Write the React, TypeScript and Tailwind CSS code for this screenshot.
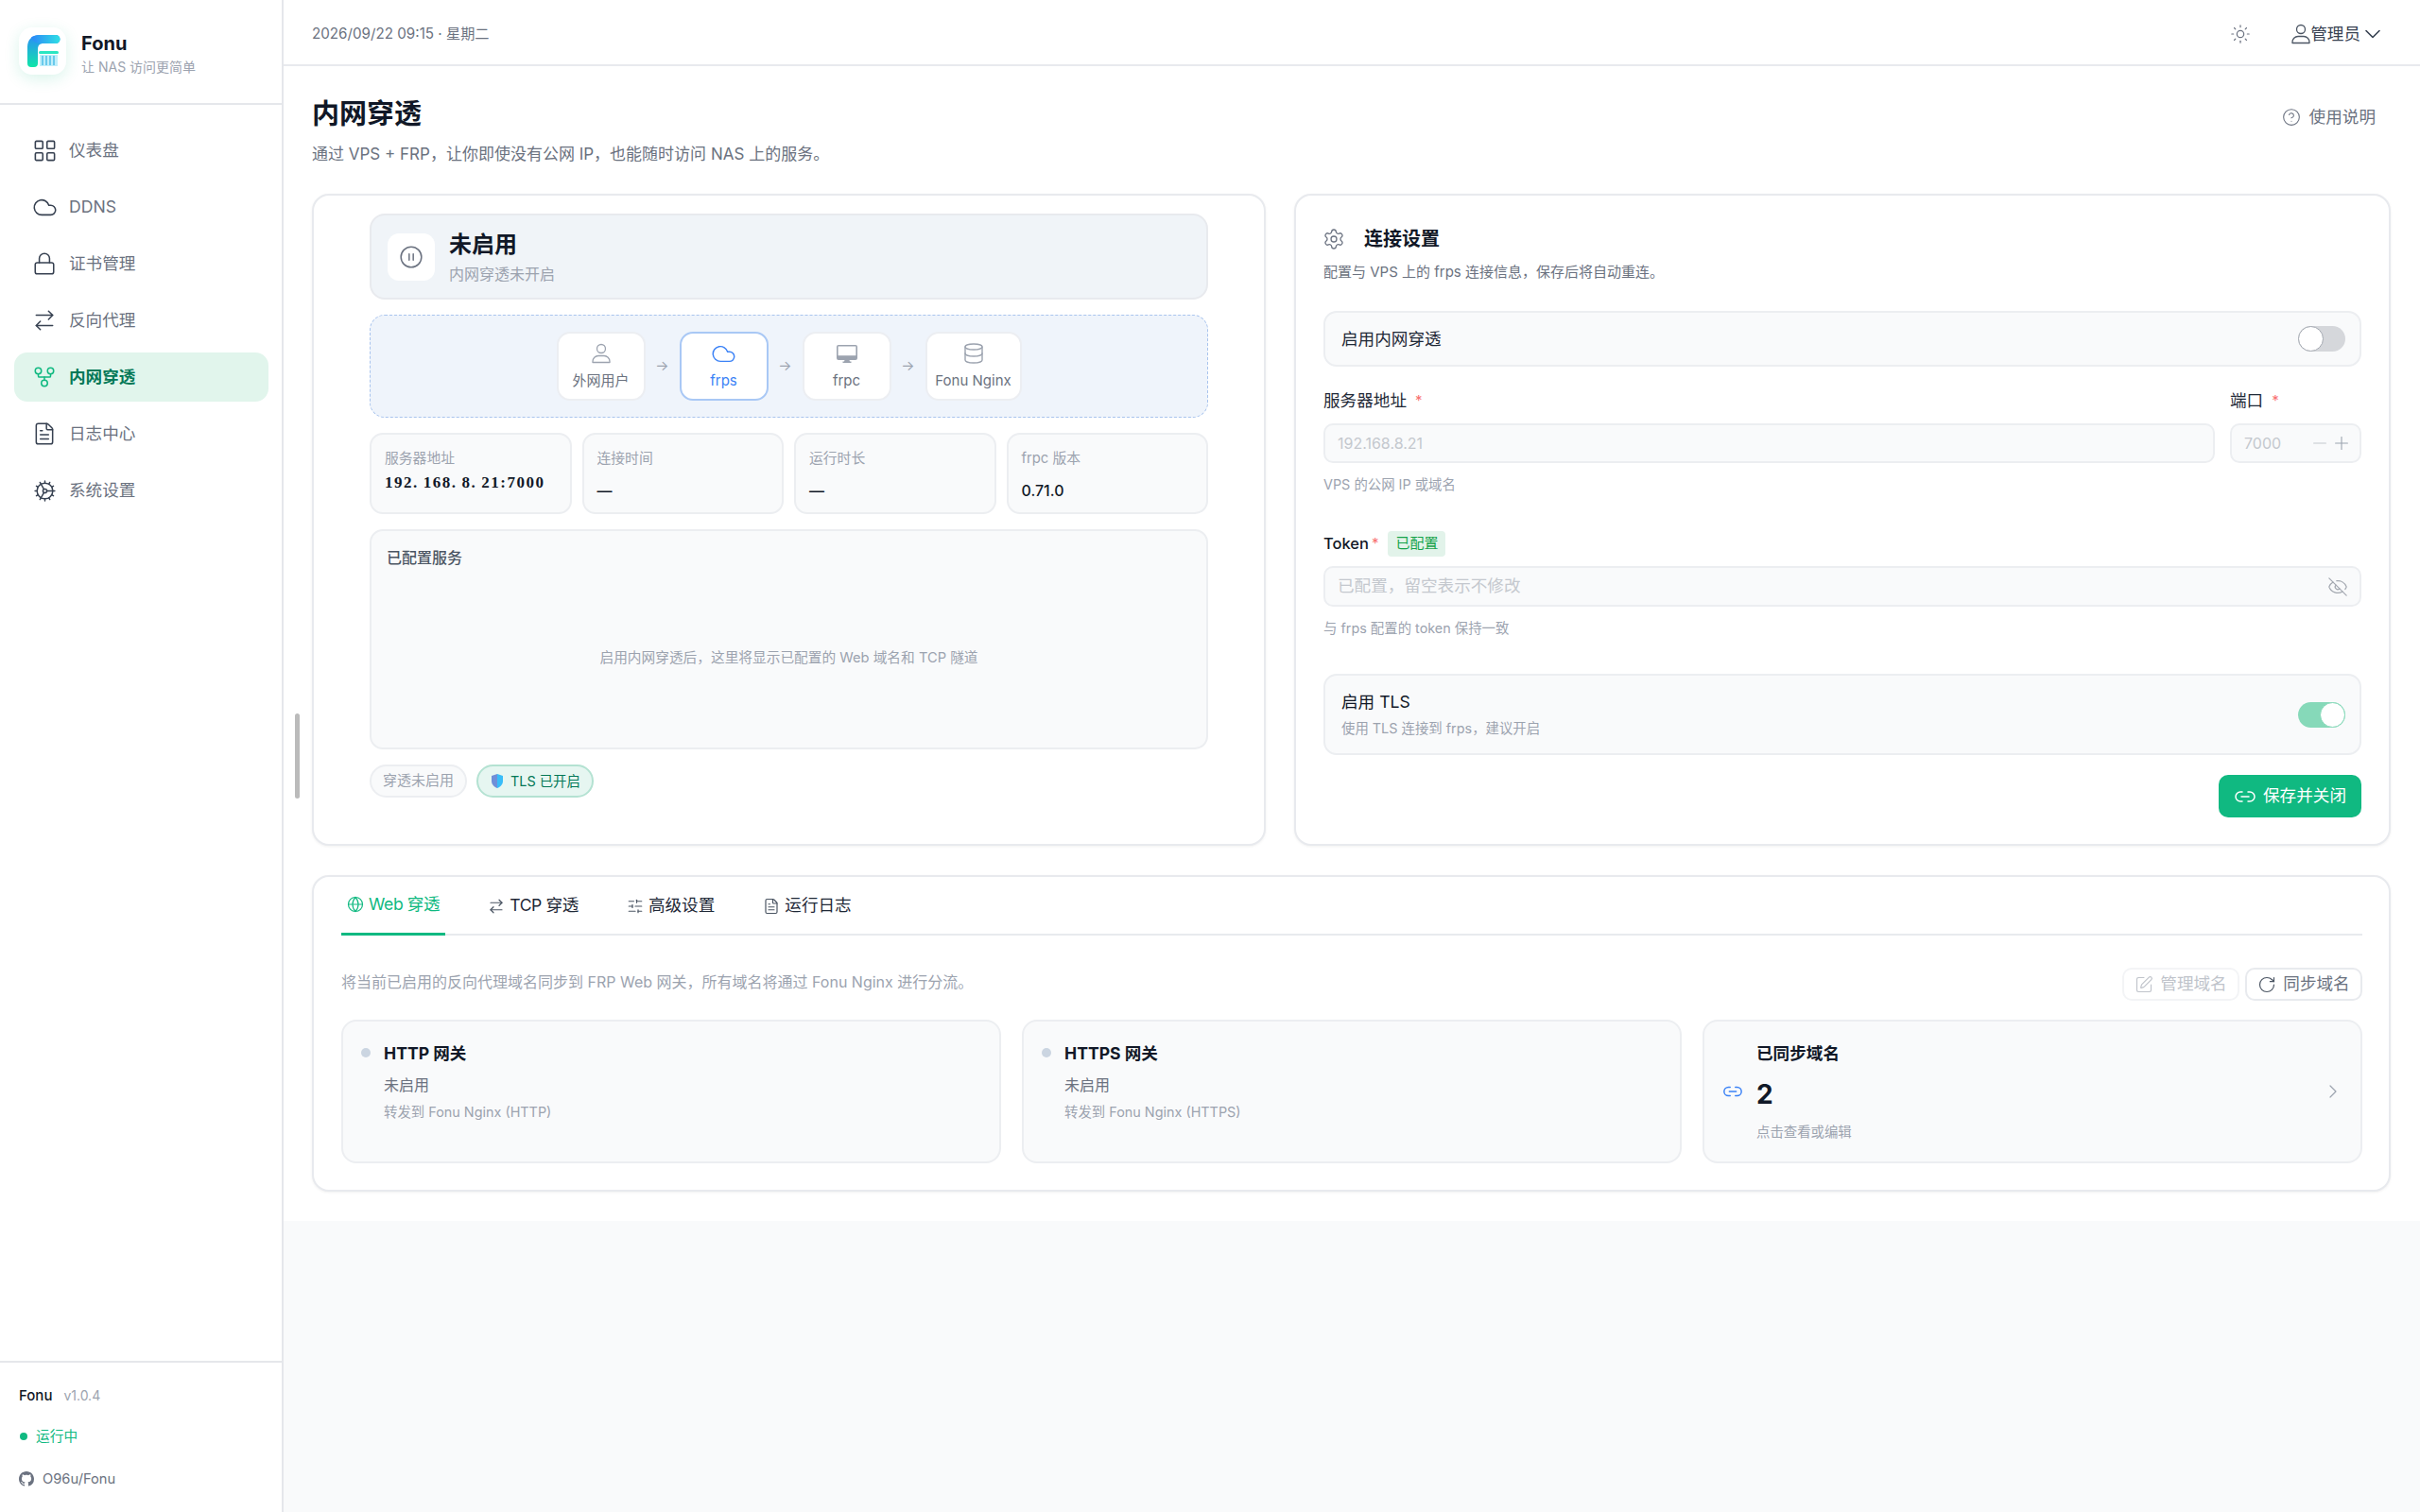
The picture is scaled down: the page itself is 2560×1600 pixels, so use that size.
import {
  ArrowRightLeft,
  ChevronDown,
  ChevronRight,
  CirclePause,
  CircleHelp,
  Cloud,
  Cog,
  Database,
  EyeOff,
  FileText,
  GitFork,
  Globe,
  LayoutGrid,
  Link2,
  Lock,
  Minus,
  Plus,
  RotateCw,
  Settings,
  SlidersHorizontal,
  SquarePen,
  Sun,
} from "lucide-react"

const navItems = [
  { label: "仪表盘", icon: LayoutGrid, size: "h-[27px] w-[27px]" },
  { label: "DDNS", icon: Cloud, size: "h-[27px] w-[27px]" },
  { label: "证书管理", icon: Lock, size: "h-[26px] w-[26px]" },
  { label: "反向代理", icon: ArrowRightLeft, size: "h-[26px] w-[26px]" },
  { label: "内网穿透", icon: GitFork, size: "h-[26px] w-[26px]", active: true },
  { label: "日志中心", icon: FileText, size: "h-[26px] w-[26px]" },
  { label: "系统设置", icon: Cog, size: "h-[25px] w-[25px]" },
]

const stats = [
  { label: "连接时间", value: "—" },
  { label: "运行时长", value: "—" },
  { label: "frpc 版本", value: "0.71.0" },
]

const tabs = [
  { label: "Web 穿透", icon: Globe, active: true, tight: true },
  { label: "TCP 穿透", icon: ArrowRightLeft, tight: true },
  { label: "高级设置", icon: SlidersHorizontal },
  { label: "运行日志", icon: FileText },
]

function UserGlyph({ className }: { className?: string }) {
  return (
    <svg viewBox="0 0 24 24" fill="none" stroke="currentColor" strokeWidth="1.3" className={className}>
      <circle cx="12" cy="7" r="4.500" />
      <path d="M3 21.500v-1a6 6 0 0 1 6-6h6a6 6 0 0 1 6 6v1z" strokeLinejoin="round" />
    </svg>
  )
}

function MonitorGlyph() {
  return (
    <svg viewBox="0 0 22 19" className="h-[19px] w-[22px] text-[#9ca3af]" fill="currentColor">
      <path d="M2 0h18a2 2 0 0 1 2 2v12a2 2 0 0 1-2 2h-6.500l.5 1.600h1.500V19h-9v-1.400H8l.5-1.600H2a2 2 0 0 1-2-2V2a2 2 0 0 1 2-2zm-.4 1.600v9.600h18.800V1.600z" />
    </svg>
  )
}

function Logo() {
  return (
    <div className="flex h-[50px] w-[50px] shrink-0 items-center justify-center rounded-[14px] bg-white shadow-[0_4px_16px_rgba(16,185,129,0.16)]">
      <svg viewBox="0 0 50 50" className="h-[50px] w-[50px]">
        <defs>
          <linearGradient id="logoTop" x1="0" y1="0" x2="1" y2="0">
            <stop offset="0" stopColor="#2b86f8" />
            <stop offset="1" stopColor="#2fe0e4" />
          </linearGradient>
          <linearGradient id="logoStem" x1="0" y1="0" x2="0" y2="1">
            <stop offset="0" stopColor="#2b8cf8" />
            <stop offset="1" stopColor="#10e6a8" />
          </linearGradient>
        </defs>
        <path d="M9 21C9 13 14 8 22 8h17a4.500 4.500 0 0 1 0 9H26c-4 0-6 2-6 6v15a4 4 0 0 1-4 4h-3a4 4 0 0 1-4-4z" fill="url(#logoStem)" />
        <path d="M13 10.500C15 9 18 8 22 8h17a4.500 4.500 0 0 1 0 9H24c-5 0-9-2-11-6.500z" fill="url(#logoTop)" />
        <rect x="21" y="25" width="21" height="3" rx="1.500" fill="#2be6c2" />
        <rect x="22" y="29" width="19" height="12" fill="#bfeefa" />
        <path d="M25 30v10M29 30v10M33 30v10M37 30v10" stroke="#4fbfe8" strokeWidth="1.500" />
      </svg>
    </div>
  )
}

function GithubMark() {
  return (
    <svg viewBox="0 0 16 16" fill="currentColor" className="h-4 w-4 text-[#6b7280]">
      <path d="M8 0C3.58 0 0 3.58 0 8c0 3.54 2.29 6.53 5.47 7.59.4.07.55-.17.55-.38 0-.19-.01-.82-.01-1.49-2.01.37-2.53-.49-2.69-.94-.09-.23-.48-.94-.82-1.13-.28-.15-.68-.52-.01-.53.63-.01 1.08.58 1.23.82.72 1.21 1.87.87 2.33.66.07-.52.28-.87.51-1.07-1.78-.2-3.64-.89-3.64-3.95 0-.87.31-1.59.82-2.15-.08-.2-.36-1.02.08-2.12 0 0 .67-.21 2.2.82.64-.18 1.32-.27 2-.27s1.36.09 2 .27c1.53-1.04 2.2-.82 2.2-.82.44 1.1.16 1.92.08 2.12.51.56.82 1.27.82 2.15 0 3.07-1.87 3.75-3.65 3.95.29.25.54.73.54 1.48 0 1.07-.01 1.93-.01 2.2 0 .21.15.46.55.38A8.01 8.01 0 0 0 16 8c0-4.42-3.58-8-8-8z" />
    </svg>
  )
}

function Toggle({ on }: { on?: boolean }) {
  return (
    <div className={`flex h-[27px] w-[50px] rounded-full ${on ? "justify-end bg-[#86d9b9]" : "justify-start bg-[#d5d7db]"}`}>
      <div className={`h-[27px] w-[27px] rounded-full border bg-white ${on ? "border-[#86d9b9]" : "border-[#a3a8b0]"}`} />
    </div>
  )
}

function Sidebar() {
  return (
    <aside className="flex w-[300px] shrink-0 flex-col border-r-2 border-[#e5e7eb] bg-white">
      <div className="flex h-[111px] items-center gap-4 border-b-2 border-[#e5e7eb] pb-[2px] pl-5">
        <Logo />
        <div className="pt-[6px]">
          <div className="text-[20px] leading-[26px] font-bold text-[#111827]">Fonu</div>
          <div className="mt-[2px] text-[14px] leading-5 text-[#9ca3af]">让 NAS 访问更简单</div>
        </div>
      </div>
      <nav className="mt-[22px] flex flex-col gap-2 pr-[14px] pl-[15px]">
        {navItems.map((item) => (
          <div
            key={item.label}
            className={`flex h-[52px] items-center gap-[14px] rounded-[14px] pl-5 text-[17.6px] ${
              item.active ? "bg-[#e1f5ec] font-semibold text-[#047857]" : "text-[#6b7280]"
            }`}
          >
            <span className="flex h-6 w-6 items-center justify-center">
              <item.icon className={`shrink-0 ${item.size} ${item.active ? "text-[#10b981]" : "text-[#374151]"}`} strokeWidth={1.4} />
            </span>
            {item.label}
          </div>
        ))}
      </nav>
      <div className="mt-auto h-[160px] border-t-2 border-[#e5e7eb] pt-[24px] pl-5">
        <div className="flex items-center gap-[12px] leading-[22px]">
          <span className="text-[15px] font-medium text-[#111827]">Fonu</span>
          <span className="text-[14px] text-[#9ca3af]">v1.0.4</span>
        </div>
        <div className="mt-[22px] flex items-center gap-[9px] text-[14.7px] leading-5 text-[#10b981]">
          <span className="ml-[1px] h-2 w-2 rounded-full bg-[#10b981]" />
          运行中
        </div>
        <div className="mt-[25px] flex items-center gap-[9px] text-[14.7px] leading-5 text-[#6b7280]">
          <GithubMark />
          O96u/Fonu
        </div>
      </div>
    </aside>
  )
}

function StatusCard() {
  return (
    <section className="flex flex-col gap-4 rounded-[18px] border-2 border-[#e8eaee] bg-white px-[59px] pt-[19px] shadow-[0_1px_3px_rgba(0,0,0,0.06)]">
      <div className="flex h-[91px] items-center gap-[15px] rounded-[16px] border-2 border-[#e8eaee] bg-[#f0f4f8] pl-[17px]">
        <div className="flex h-[50px] w-[50px] items-center justify-center rounded-[12px] bg-white">
          <CirclePause className="h-[26px] w-[26px] text-[#6b7280]" strokeWidth={1.4} />
        </div>
        <div>
          <div className="text-[24px] leading-8 font-bold text-[#111827]">未启用</div>
          <div className="mt-[5px] text-[16px] leading-5 text-[#9ca3af]">内网穿透未开启</div>
        </div>
      </div>

      <div className="flex h-[109px] items-center justify-center rounded-[16px] border border-dashed border-[#a9c4ee] bg-[#eff4fb]">
        <FlowNode icon={<UserGlyph className="h-6 w-6 text-[#9ca3af]" />} label="外网用户" />
        <FlowArrow />
        <FlowNode icon={<Cloud className="h-[27px] w-[27px] text-[#3b82f6]" strokeWidth={1.3} />} label="frps" highlight />
        <FlowArrow />
        <FlowNode icon={<MonitorGlyph />} label="frpc" />
        <FlowArrow />
        <FlowNode icon={<Database className="h-6 w-6 text-[#9ca3af]" strokeWidth={1.4} />} label="Fonu Nginx" wide />
      </div>

      <div className="grid grid-cols-4 gap-[11px]">
        <div className="h-[86px] rounded-[14px] border-2 border-[#eceef1] bg-[#f9fafb] px-[14px] pt-[15px]">
          <div className="text-[14.8px] leading-5 text-[#9ca3af]">服务器地址</div>
          <div className="mt-[6px] font-['Liberation_Serif',serif] text-[17px] leading-5 font-bold tracking-[1.5px] text-[#111827]">
            192<span className="mr-[5px]">.</span>168<span className="mr-[5px]">.</span>8<span className="mr-[5px]">.</span>21:7000
          </div>
        </div>
        {stats.map((stat) => (
          <div key={stat.label} className="h-[86px] rounded-[14px] border-2 border-[#eceef1] bg-[#f9fafb] px-[14px] pt-[15px]">
            <div className="text-[14.8px] leading-5 text-[#9ca3af]">{stat.label}</div>
            <div className="mt-[12px] text-[16px] leading-6 font-medium text-[#111827]">{stat.value}</div>
          </div>
        ))}
      </div>

      <div className="flex h-[233px] flex-col rounded-[14px] border-2 border-[#eceef1] bg-[#f9fafb] px-4 pt-[17px]">
        <div className="text-[16px] leading-[22px] font-medium text-[#4b5563]">已配置服务</div>
        <div className="flex flex-1 items-center justify-center text-[14.7px] text-[#9ca3af]">
          启用内网穿透后，这里将显示已配置的 Web 域名和 TCP 隧道
        </div>
      </div>

      <div className="flex gap-[10px]">
        <span className="flex h-[35px] items-center rounded-full border-2 border-[#eceef1] bg-[#f9fafb] px-3 text-[15px] text-[#9ca3af]">
          穿透未启用
        </span>
        <span className="flex h-[35px] items-center gap-[8px] rounded-full border-2 border-[#b4e2d2] bg-[#e6f6f1] pr-3 pl-[14px] text-[14.4px] text-[#047857]">
          <svg viewBox="0 0 12 15" className="h-[15px] w-3">
            <path d="M6 0l6 2v5.500C12 11 9.500 13.500 6 15z" fill="#38bdf8" />
            <path d="M6 0L0 2v5.500C0 11 2.500 13.500 6 15z" fill="#6f8fd8" />
          </svg>
          TLS 已开启
        </span>
      </div>
    </section>
  )
}

function FlowNode({ icon, label, highlight, wide }: { icon: React.ReactNode; label: string; highlight?: boolean; wide?: boolean }) {
  return (
    <div
      className={`flex h-[73px] flex-col items-center rounded-[14px] border-2 bg-white pt-[9px] text-[15px] ${
        wide ? "w-[102px]" : "w-[94px]"
      } ${highlight ? "border-[#a9c8f5] text-[#3b82f6]" : "border-[#eceef2] text-[#6b7280]"}`}
    >
      <div className="flex h-[24px] items-center">{icon}</div>
      <div className="mt-[7px] leading-5">{label}</div>
    </div>
  )
}

function FlowArrow() {
  return <div className="flex w-[36px] justify-center text-[15px] text-[#9ca3af]">→</div>
}

function SettingsCard() {
  return (
    <section className="rounded-[18px] border-2 border-[#e8eaee] bg-white px-[29px] pt-[32px] shadow-[0_1px_3px_rgba(0,0,0,0.06)]">
      <div className="flex h-7 items-center gap-[20px]">
        <Settings className="-ml-[1px] h-6 w-6 text-[#6b7280]" strokeWidth={1.3} />
        <h2 className="text-[20px] font-bold text-[#111827]">连接设置</h2>
      </div>
      <p className="mt-[9px] text-[15px] leading-6 text-[#6b7280]">配置与 VPS 上的 frps 连接信息，保存后将自动重连。</p>

      <div className="mt-[29px] flex h-[59px] items-center justify-between rounded-[14px] border-2 border-[#eceef1] bg-[#f9fafb] pr-[15px] pl-[17px]">
        <span className="pt-[2px] text-[17.6px] text-[#1f2937]">启用内网穿透</span>
        <Toggle />
      </div>

      <div className="mt-[23px] grid grid-cols-[1fr_139px] gap-x-4">
        <div>
          <Label text="服务器地址" />
          <input
            disabled
            placeholder="192.168.8.21"
            className="mt-[11px] h-[42px] w-full rounded-[10px] border-2 border-[#eceef1] bg-[#f9fafb] px-[13px] text-[16px] placeholder:text-[#c4c8ce]"
          />
          <p className="mt-[13px] text-[14.4px] leading-5 text-[#9ca3af]">VPS 的公网 IP 或域名</p>
        </div>
        <div>
          <Label text="端口" />
          <div className="mt-[11px] flex h-[42px] items-center rounded-[10px] border-2 border-[#eceef1] bg-[#f9fafb] pr-[8px] pl-[13px] text-[16px] text-[#c4c8ce]">
            <span>7000</span>
            <Minus className="ml-auto h-[22px] w-[22px]" strokeWidth={1.2} />
            <Plus className="ml-[1px] h-[22px] w-[22px] text-[#9ca3af]" strokeWidth={1.2} />
          </div>
        </div>
      </div>

      <div className="mt-[39px] flex h-[27px] items-center">
        <span className="text-[16.5px] font-medium text-[#111827]">Token</span>
        <span className="ml-[3px] text-[15px] text-[#f87171]">*</span>
        <span className="ml-[10px] flex h-[27px] items-center rounded-[4px] bg-[#e2f3ea] px-2 text-[15px] text-[#16a34a]">已配置</span>
      </div>
      <div className="mt-[10px] flex h-[43px] items-center justify-between rounded-[10px] border-2 border-[#eceef1] bg-[#f9fafb] pr-[12px] pl-[13px]">
        <span className="text-[17.6px] text-[#c4c8ce]">已配置，留空表示不修改</span>
        <EyeOff className="h-[22px] w-[22px] text-[#a3a8b0]" strokeWidth={1.3} />
      </div>
      <p className="mt-[13px] text-[14.4px] leading-5 text-[#9ca3af]">与 frps 配置的 token 保持一致</p>

      <div className="mt-[38px] flex h-[86px] items-center justify-between rounded-[14px] border-2 border-[#eceef1] bg-[#f9fafb] pr-[15px] pl-[17px]">
        <div>
          <div className="text-[17.6px] leading-6 text-[#111827]">启用 TLS</div>
          <div className="mt-[6px] text-[14.4px] leading-5 text-[#9ca3af]">使用 TLS 连接到 frps，建议开启</div>
        </div>
        <Toggle on />
      </div>

      <div className="mt-[21px] flex justify-end">
        <button type="button" className="flex h-[45px] w-[151px] items-center justify-center gap-[7px] rounded-[10px] bg-[#10b981] text-[17.6px] text-white">
          <Link2 className="h-6 w-6" strokeWidth={1.5} />
          保存并关闭
        </button>
      </div>
    </section>
  )
}

function Label({ text }: { text: string }) {
  return (
    <div className="flex h-[26px] items-center text-[17.6px] text-[#1f2937]">
      {text}
      <span className="ml-[9px] text-[15px] text-[#f87171]">*</span>
    </div>
  )
}

function GatewayCard({ title, target }: { title: string; target: string }) {
  return (
    <div className="flex h-[152px] gap-[14px] rounded-[16px] border-2 border-[#eceef1] bg-[#f9fafb] pt-[21px] pl-[19px]">
      <span className="mt-[7px] h-[10px] w-[10px] rounded-full bg-[#cbd5e1]" />
      <div>
        <div className="text-[17.6px] leading-[26px] font-bold text-[#111827]">{title}</div>
        <div className="mt-2 text-[16px] leading-6 text-[#6b7280]">未启用</div>
        <div className="mt-[7px] text-[14.4px] leading-5 text-[#9ca3af]">{target}</div>
      </div>
    </div>
  )
}

function TunnelCard() {
  return (
    <section className="mt-[31px] rounded-[18px] border-2 border-[#e8eaee] bg-white pr-[28px] pb-[28px] pl-[29px] shadow-[0_1px_3px_rgba(0,0,0,0.06)]">
      <div className="flex h-[62px] gap-[39px] border-b-2 border-[#e8eaee]">
        {tabs.map((tab) => (
          <div
            key={tab.label}
            className={`-mb-[2px] flex h-[62px] items-center gap-[5px] pr-[6px] pl-[6px] pb-[1px] text-[17.6px] ${
              tab.active ? "border-b-[3px] border-[#10b981] text-[#10b981]" : "text-[#1f2937]"
            } ${tab.tight ? "tracking-[-0.4px]" : ""}`}
          >
            <tab.icon className={`h-[18px] w-[18px] ${tab.active ? "text-[#10b981]" : "text-[#4b5563]"}`} strokeWidth={1.6} />
            {tab.label}
          </div>
        ))}
      </div>

      <div className="mt-[34px] flex h-[35px] items-center justify-between">
        <p className="-mt-[6px] text-[16px] text-[#9ca3af]">将当前已启用的反向代理域名同步到 FRP Web 网关，所有域名将通过 Fonu Nginx 进行分流。</p>
        <div className="flex gap-[6px]">
          <button type="button" className="flex h-[35px] w-[124px] items-center justify-center gap-[7px] rounded-[10px] border-2 border-[#f3f4f6] text-[17.6px] text-[#c0c4cb]">
            <SquarePen className="h-5 w-5" strokeWidth={1.4} />
            管理域名
          </button>
          <button type="button" className="flex h-[35px] w-[124px] items-center justify-center gap-[7px] rounded-[10px] border-2 border-[#e8eaee] text-[17.6px] text-[#6b7280]">
            <RotateCw className="h-5 w-5 text-[#4b5563]" strokeWidth={1.4} />
            同步域名
          </button>
        </div>
      </div>

      <div className="mt-[20px] grid grid-cols-3 gap-[22px]">
        <GatewayCard title="HTTP 网关" target="转发到 Fonu Nginx (HTTP)" />
        <GatewayCard title="HTTPS 网关" target="转发到 Fonu Nginx (HTTPS)" />
        <div className="flex h-[152px] items-center gap-[14px] rounded-[16px] border-2 border-[#eceef1] bg-[#f9fafb] pr-[17px] pl-[19px]">
          <Link2 className="h-[22px] w-[22px] text-[#3b82f6]" strokeWidth={1.6} />
          <div>
            <div className="text-[17.6px] leading-[26px] font-bold text-[#111827]">已同步域名</div>
            <div className="mt-[12px] text-[28px] leading-9 font-bold text-[#111827]">2</div>
            <div className="mt-[12px] text-[14.4px] leading-5 text-[#9ca3af]">点击查看或编辑</div>
          </div>
          <ChevronRight className="ml-auto h-6 w-6 text-[#9ca3af]" strokeWidth={1.2} />
        </div>
      </div>
    </section>
  )
}

export default function App() {
  return (
    <div className="flex h-[1600px] w-[2560px] overflow-hidden bg-[#f9fafb] font-['Inter','Noto_Sans_CJK_SC',sans-serif]">
      <Sidebar />
      <main className="relative flex-1">
        <div className="absolute top-[755px] left-[12px] h-[90px] w-[5px] rounded-full bg-[#bbbbbb]" />
        <div className="bg-white pb-[31px]">
          <header className="flex h-[70px] items-center justify-between border-b-2 border-[#e8eaee] pt-[4px] pr-[36px] pl-[30px]">
            <span className="text-[15.2px] text-[#6b7280]">2026/09/22 09:15 · 星期二</span>
            <div className="flex items-center">
              <Sun className="h-[22px] w-[22px] text-[#6b7280]" strokeWidth={1.3} />
              <UserGlyph className="ml-[41px] -mr-[2px] h-6 w-6 text-[#4b5563]" />
              <span className="text-[17.6px] text-[#374151]">管理员</span>
              <ChevronDown className="-ml-[1px] h-[28px] w-[28px] text-[#374151]" strokeWidth={1.4} />
            </div>
          </header>
          <div className="pr-[31px] pl-[30px]">
            <div className="flex items-start justify-between pt-[33px]">
              <div>
                <h1 className="text-[29px] leading-9 font-bold text-[#111827]">内网穿透</h1>
                <p className="mt-[12px] text-[17px] leading-6 text-[#6b7280]">通过 VPS + FRP，让你即使没有公网 IP，也能随时访问 NAS 上的服务。</p>
              </div>
              <div className="mt-[8px] mr-[16px] flex items-center gap-[9px] text-[17.6px] text-[#6b7280]">
                <CircleHelp className="h-5 w-5" strokeWidth={1.3} />
                使用说明
              </div>
            </div>
            <div className="mt-[30px] grid h-[690px] grid-cols-[1009px_1fr] gap-[30px]">
              <StatusCard />
              <SettingsCard />
            </div>
            <TunnelCard />
          </div>
        </div>
      </main>
    </div>
  )
}
